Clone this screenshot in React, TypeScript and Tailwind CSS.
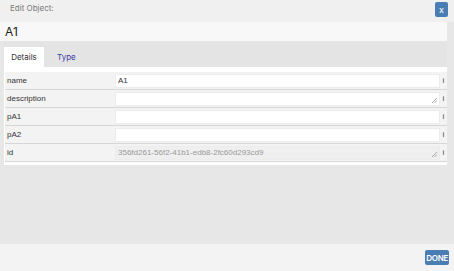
import React from 'react';

interface Field {
  key: string;
  value: string;
  multiline: boolean;
  readOnly: boolean;
}

const fields: Field[] = [
  { key: 'name', value: 'A1', multiline: false, readOnly: false },
  { key: 'description', value: '', multiline: true, readOnly: false },
  { key: 'pA1', value: '', multiline: false, readOnly: false },
  { key: 'pA2', value: '', multiline: false, readOnly: false },
  { key: 'id', value: '356fd261-56f2-41b1-edb8-2fc60d293cd9', multiline: true, readOnly: true },
];

const Grip = () => (
  <svg width="6" height="6" viewBox="0 0 6 6" className="absolute right-[2px] bottom-[2px]">
    <path d="M1 6 L6 1 M3.5 6 L6 3.5" stroke="#888" strokeWidth="0.7" />
  </svg>
);

export default function App() {
  return (
    <div className="w-[454px] h-[271px] bg-[#e7e7e7] flex flex-col overflow-hidden font-['Inter',sans-serif]">
      {/* header */}
      <div className="h-[22px] bg-[#f0f0f0] flex items-center justify-between pl-[10px] pr-[6px] shrink-0">
        <span className="text-[8px] text-[#7a7a7a] -mt-[6px]">Edit Object:</span>
        <button className="w-[13px] h-[15px] bg-[#4a7db4] rounded-[2px] text-white text-[9px] leading-none flex items-center justify-center -mt-[3px]">
          x
        </button>
      </div>

      {/* title */}
      <div className="h-[19px] bg-[#f8f8f8] mr-[7px] flex items-center pl-[5px] shrink-0">
        <span className="text-[12px] text-[#222]">A1</span>
      </div>

      {/* tabs */}
      <div className="h-[26px] bg-[#e4e4e4] ml-[3px] mr-[7px] flex items-end pl-[1px] shrink-0">
        <div className="h-[20px] w-[40px] bg-white flex items-center justify-center text-[8px] text-[#333]">
          Details
        </div>
        <div className="h-[20px] ml-[13px] flex items-center text-[8px] text-[#3b3ba6]">Type</div>
      </div>

      {/* panel */}
      <div className="bg-white ml-[4px] mr-[7px] pt-[5px] pb-[3px] pl-[1px] pr-[0px] shrink-0 font-['Liberation_Sans',sans-serif]">
        {fields.map((f) => (
          <div key={f.key} className="h-[18px] flex items-center bg-[#f3f3f3] border-b border-[#d6d6d6]">
            <div className="w-[110px] pl-[2px] text-[8px] text-[#333]">{f.key}</div>
            <div
              className={
                'relative h-[14px] w-[325px] flex items-center pl-[2px] text-[8px] border border-[#ececec] ' +
                (f.readOnly ? 'bg-[#efefef] text-[#999]' : 'bg-white text-[#333]')
              }
            >
              {f.value}
              {f.multiline && <Grip />}
            </div>
            <div className="flex-1 text-center text-[8px] text-[#444]">i</div>
          </div>
        ))}
      </div>

      <div className="flex-1" />

      {/* footer */}
      <div className="h-[28px] bg-[#f3f3f3] border-t border-[#e9e9e9] flex items-center justify-end pr-[5px] shrink-0">
        <button className="h-[15px] px-[1px] bg-[#4a7db4] rounded-[2px] text-white text-[8px] font-semibold leading-none tracking-[-0.3px]">
          DONE
        </button>
      </div>
    </div>
  );
}
